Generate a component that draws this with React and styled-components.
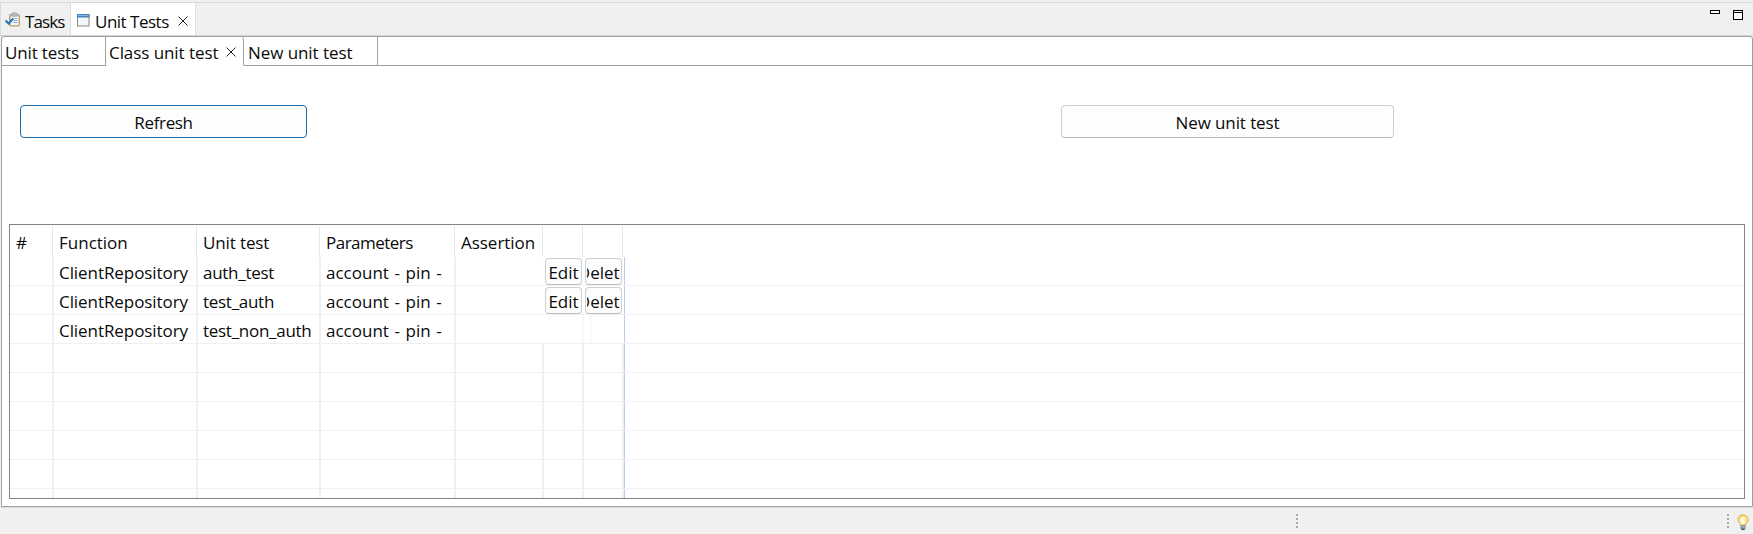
import React from 'react';
import styled, { createGlobalStyle } from 'styled-components';

const Global = createGlobalStyle`
  * { box-sizing: border-box; }
  body { margin: 0; background: #f0f0f0; }
`;

const Window = styled.div`
  width: 1753px;
  height: 534px;
  display: flex;
  flex-direction: column;
  overflow: hidden;
  background: #f0f0f0;
  color: #0a0a0a;
  font-family: "Open Sans", "Noto Sans", sans-serif;
  font-size: 17px;
  line-height: 24px;
  white-space: nowrap;
`;

const Text = styled.span`
  letter-spacing: ${p => p.$track || 0}px;
  word-spacing: ${p => p.$words || 0}px;
`;

const ViewBar = styled.div`
  height: 34px;
  margin-top: 2px;
  flex: none;
  display: flex;
  justify-content: space-between;
  border-top: 1px solid #d8d8d8;
  border-bottom: 1px solid #d4d4d4;
  border-left: 1px solid #dcdcdc;
`;

const ViewTabs = styled.div`
  display: flex;
`;

const ViewTab = styled.div`
  width: ${p => p.$width}px;
  padding: 7px 0 0 ${p => p.$left}px;
  display: flex;
  align-items: flex-start;
  background: ${p => (p.$active ? '#fff' : 'transparent')};
  border-right: 1px solid #dedede;
`;

const Icon = styled.svg`
  display: block;
  flex: none;
  margin: ${p => p.$margin || 0};
`;

const WindowTools = styled.div`
  display: flex;
  padding: 7px 10px 0 0;
  gap: 13px;
`;

const Frame = styled.main`
  height: 471px;
  flex: none;
  margin-left: 1px;
  display: flex;
  flex-direction: column;
  background: #fff;
  border: 1px solid #a0a0a0;
  border-radius: 3px 3px 0 0;
`;

const PageTabs = styled.div`
  height: 29px;
  flex: none;
  display: flex;
`;

const PageTab = styled.div`
  width: ${p => p.$width}px;
  padding: 4px 0 0 ${p => p.$left}px;
  display: flex;
  border-right: 1px solid #a0a0a0;
  border-bottom: 1px solid ${p => (p.$active ? '#fff' : '#a0a0a0')};
  border-top-right-radius: ${p => (p.$active ? 3 : 0)}px;
`;

const TabFill = styled.div`
  flex: 1;
  border-bottom: 1px solid #a0a0a0;
`;

const Actions = styled.div`
  display: flex;
  gap: 754px;
  padding: 39px 0 0 18px;
  height: 158px;
  flex: none;
`;

const Button = styled.button`
  width: ${p => p.$width}px;
  height: 33px;
  padding: 5px 0 0;
  display: flex;
  align-items: flex-start;
  justify-content: center;
  font: inherit;
  color: inherit;
  background: #fdfdfd;
  border: 1px solid ${p => (p.$primary ? '#1a6cb0' : '#d0d0d0')};
  border-bottom-color: ${p => (p.$primary ? '#1a6cb0' : '#bcbcbc')};
  border-radius: 4px;
`;

const Table = styled.div`
  height: 275px;
  flex: none;
  margin: 0 7px 0 7px;
  padding-bottom: 1px;
  border: 1px solid #838383;
  overflow: hidden;
  display: flex;
  flex-direction: column;
`;

const columns = [44, 144, 123, 135, 88, 40, 40];

const HeaderRow = styled.div`
  height: 32px;
  padding-top: 1px;
  flex: none;
  display: grid;
  grid-template-columns: 43px 144px 123px 135px 88px 40px 40px;
`;

const HeaderCell = styled.div`
  padding: 5px 0 0 6px;
  border-right: 1px solid #e4e6ea;
`;

const BodyRow = styled.div`
  height: ${p => (p.$last ? 9 : 29)}px;
  flex: none;
  display: grid;
  grid-template-columns: ${columns.map(c => c + 'px').join(' ')} 1fr;
  border-bottom: ${p => (p.$last ? 0 : 1)}px solid #eff0f2;
`;

const Cell = styled.div`
  padding: ${p => (p.$empty ? 0 : 4)}px 0 0 5px;
  border-right: 2px solid ${p => p.$line || '#eef0f3'};
`;

const ButtonCell = styled.div`
  padding: 1px 1px 0 1px;
  display: flex;
`;

const CellButton = styled.button`
  width: 37px;
  height: 27px;
  padding: 2px 1px 0;
  display: flex;
  align-items: flex-start;
  justify-content: center;
  overflow: hidden;
  font: inherit;
  color: inherit;
  background: #fdfdfd;
  border: 1px solid #cfcfcf;
  border-bottom-color: #bdbdbd;
  border-radius: 4px;
`;

const Clip = styled.span`
  width: 33px;
  height: 24px;
  display: flex;
  flex: none;
  justify-content: center;
  overflow: hidden;
`;

const StubCell = styled.div`
  width: 7px;
  border-right: 1px solid #f3f4fa;
`;

const EndCell = styled.div`
  border-left: 1px solid #b9cdec;
`;

const StatusBar = styled.footer`
  flex: 1;
  display: flex;
  align-items: flex-start;
  justify-content: flex-end;
  padding: 6px 4px 0 0;
  border-top: 1px solid #dcdcdc;
`;

const Grip = styled.div`
  display: grid;
  gap: 2px;
  margin: 0 ${p => p.$after}px 0 0;
`;

const Dot = styled.i`
  width: 2px;
  height: 2px;
  background: #a9a9a9;
`;

const TasksIcon = () => (
  <Icon width="16" height="16" viewBox="0 0 16 16" $margin="2px 4px 0 0">
    <rect x="4.5" y="2.5" width="10" height="11.5" rx="0.8" fill="#d9bd92" stroke="#b8a180" />
    <rect x="6" y="4.5" width="7.5" height="8.5" fill="#f2f6fb" />
    <rect x="7" y="0.8" width="5" height="3.4" rx="1" fill="#b4bdc9" stroke="#8f9aab" strokeWidth="0.6" />
    <path d="M9.5 6.5h3M9 8.5h3.5M8 10.5h4.5" stroke="#8fb0da" strokeWidth="1" />
    <path d="M0.5 8.6L3.6 11.6L8.4 6.6" fill="none" stroke="#1d78c4" strokeWidth="2.1" />
  </Icon>
);

const ViewIcon = () => (
  <Icon width="13" height="13" viewBox="0 0 13 13" $margin="4px 5px 0 0">
    <rect x="0.5" y="0.5" width="11.5" height="11.5" fill="#f1f7fd" stroke="#8f8a70" />
    <rect x="0" y="0" width="12.5" height="3.5" fill="#4583c0" />
    <rect x="1" y="1" width="10.5" height="1" fill="#86b5e2" />
  </Icon>
);

const CloseIcon = ({ margin }) => (
  <Icon width="10" height="10" viewBox="0 0 10 10" $margin={margin}>
    <path d="M0.5 0.5L9.5 9.5M9.5 0.5L0.5 9.5" stroke="#222" strokeWidth="1" fill="none" />
  </Icon>
);

const BulbIcon = () => (
  <Icon width="12" height="17" viewBox="0 0 12 17">
    <path d="M6 0.8C2.9 0.8 0.8 3 0.8 5.6C0.8 8 3.2 9 3.6 11.3H8.4C8.8 9 11.2 8 11.2 5.6C11.2 3 9.1 0.8 6 0.8Z" fill="#fbdc83" stroke="#e6b04a" />
    <ellipse cx="6" cy="6.5" rx="2.4" ry="3.6" fill="#fffbe0" />
    <rect x="3.4" y="11.2" width="5.2" height="3.6" fill="#7d8a9c" />
    <path d="M3.4 12.8H8.6" stroke="#c6ced9" strokeWidth="0.8" />
    <rect x="4.4" y="14.6" width="3.2" height="1.4" fill="#3f4a5a" />
  </Icon>
);

const rows = [
  { name: 'auth_test', buttons: true },
  { name: 'test_auth', buttons: true },
  { name: 'test_non_auth', buttons: false },
];

const Dots = ({ after }) => (
  <Grip $after={after}><Dot /><Dot /><Dot /><Dot /></Grip>
);

const EmptyRow = ({ last }) => (
  <BodyRow $last={last}>
    {columns.map((c, i) => <Cell key={i} $empty />)}
    <EndCell />
  </BodyRow>
);

export default function App() {
  return (
    <>
      <Global />
      <Window>
        <ViewBar>
          <ViewTabs>
            <ViewTab $width={70} $left={4}>
              <TasksIcon /><Text $track={-0.9}>Tasks</Text>
            </ViewTab>
            <ViewTab $width={125} $left={6} $active>
              <ViewIcon /><Text $track={-0.5}>Unit Tests</Text>
              <CloseIcon margin="6px 0 0 9px" />
            </ViewTab>
          </ViewTabs>
          <WindowTools>
            <Icon width="10" height="4" viewBox="0 0 10 4">
              <rect x="0.5" y="0.5" width="9" height="3" fill="#fff" stroke="#000" />
            </Icon>
            <Icon width="10" height="10" viewBox="0 0 10 10">
              <rect x="0.5" y="0.5" width="9" height="9" fill="#fff" stroke="#000" />
              <path d="M0 2.5H10" stroke="#000" />
            </Icon>
          </WindowTools>
        </ViewBar>
        <Frame>
          <PageTabs>
            <PageTab $width={104} $left={3}><Text $track={-0.15}>Unit tests</Text></PageTab>
            <PageTab $width={138} $left={3} $active>
              <Text $track={-0.07}>Class unit test</Text>
              <CloseIcon margin="6px 0 0 8px" />
            </PageTab>
            <PageTab $width={134} $left={4}><Text $track={-0.07}>New unit test</Text></PageTab>
            <TabFill />
          </PageTabs>
          <Actions>
            <Button $width={287} $primary><Text $track={-0.35}>Refresh</Text></Button>
            <Button $width={333}><Text $track={-0.1}>New unit test</Text></Button>
          </Actions>
          <Table>
            <HeaderRow>
              <HeaderCell><Text>#</Text></HeaderCell>
              <HeaderCell><Text>Function</Text></HeaderCell>
              <HeaderCell><Text $track={-0.12}>Unit test</Text></HeaderCell>
              <HeaderCell><Text $track={-0.52}>Parameters</Text></HeaderCell>
              <HeaderCell><Text $track={-0.03}>Assertion</Text></HeaderCell>
              <HeaderCell />
              <HeaderCell />
            </HeaderRow>
            {rows.map(r => (
              <BodyRow key={r.name}>
                <Cell />
                <Cell><Text $track={-0.07}>ClientRepository</Text></Cell>
                <Cell><Text $track={-0.28}>{r.name}</Text></Cell>
                <Cell><Text $words={1.2}>account - pin -</Text></Cell>
                <Cell $line="#fff" />
                {r.buttons ? (
                  <>
                    <ButtonCell><CellButton><Text>Edit</Text></CellButton></ButtonCell>
                    <ButtonCell>
                      <CellButton><Clip><Text>Delete</Text></Clip></CellButton>
                    </ButtonCell>
                  </>
                ) : (
                  <>
                    <Cell $line="#f6f6fb" />
                    <StubCell />
                  </>
                )}
                <EndCell />
              </BodyRow>
            ))}
            <EmptyRow /><EmptyRow /><EmptyRow /><EmptyRow /><EmptyRow />
            <EmptyRow last />
          </Table>
        </Frame>
        <StatusBar>
          <Dots after={429} />
          <Dots after={8} />
          <BulbIcon />
        </StatusBar>
      </Window>
    </>
  );
}
